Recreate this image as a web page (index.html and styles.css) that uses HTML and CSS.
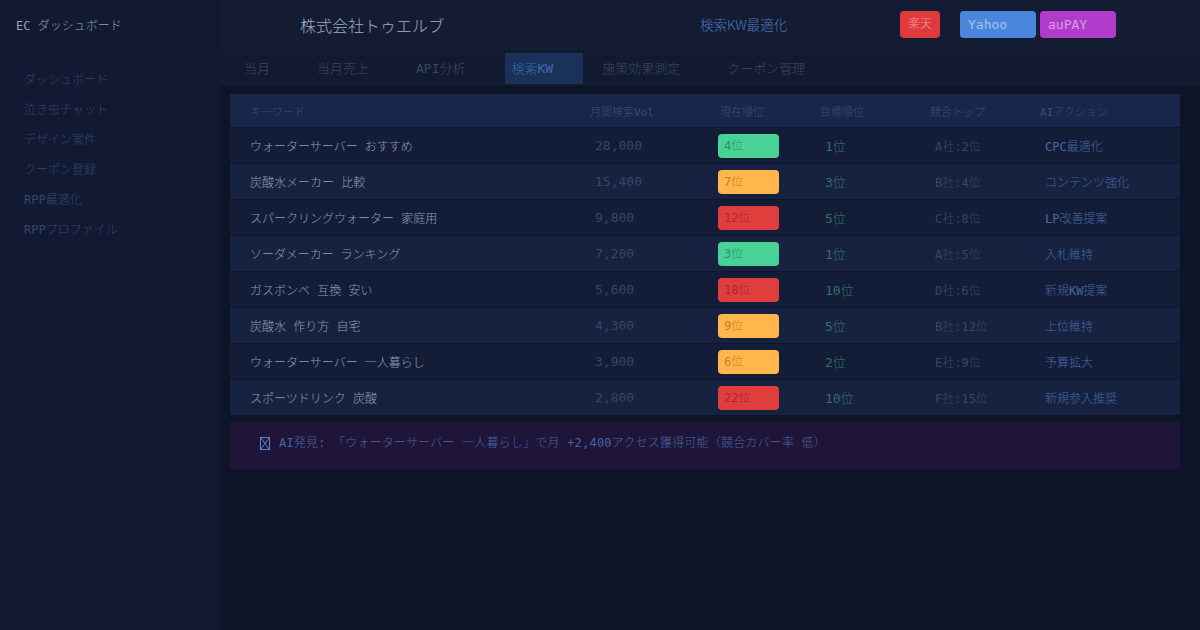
FILE: index.html
```html
<!DOCTYPE html>
<html lang="ja">
<head>
  <meta charset="UTF-8">
  <title>EC ダッシュボード - 検索KW最適化</title>
  <link rel="stylesheet" href="styles.css">
</head>
<body>
  <aside class="sidebar">
    <div class="brand">EC ダッシュボード</div>
    <nav class="side-nav">
      <a>ダッシュボード</a>
      <a>泣き虫チャット</a>
      <a>デザイン案件</a>
      <a>クーポン登録</a>
      <a>RPP最適化</a>
      <a>RPPプロファイル</a>
    </nav>
  </aside>

  <main class="main">
    <header class="topbar">
      <div class="company">株式会社トゥエルブ</div>
      <div class="page-title">検索KW最適化</div>
      <div class="malls">
        <span class="mall rakuten">楽天</span>
        <span class="mall yahoo">Yahoo</span>
        <span class="mall aupay">auPAY</span>
      </div>
    </header>

    <nav class="tabs">
      <span class="tab">当月</span>
      <span class="tab">当月売上</span>
      <span class="tab">API分析</span>
      <span class="tab active">検索KW</span>
      <span class="tab">施策効果測定</span>
      <span class="tab">クーポン管理</span>
    </nav>

    <section class="content">
      <div class="kw-table">
        <div class="row head">
          <span>キーワード</span>
          <span>月間検索Vol</span>
          <span>現在順位</span>
          <span>目標順位</span>
          <span>競合トップ</span>
          <span>AIアクション</span>
        </div>
        <div class="row">
          <span class="kw">ウォーターサーバー おすすめ</span>
          <span class="vol">28,000</span>
          <span><b class="rank good">4位</b></span>
          <span class="target">1位</span>
          <span class="rival">A社:2位</span>
          <span class="action">CPC最適化</span>
        </div>
        <div class="row">
          <span class="kw">炭酸水メーカー 比較</span>
          <span class="vol">15,400</span>
          <span><b class="rank mid">7位</b></span>
          <span class="target">3位</span>
          <span class="rival">B社:4位</span>
          <span class="action">コンテンツ強化</span>
        </div>
        <div class="row">
          <span class="kw">スパークリングウォーター 家庭用</span>
          <span class="vol">9,800</span>
          <span><b class="rank bad">12位</b></span>
          <span class="target">5位</span>
          <span class="rival">C社:8位</span>
          <span class="action">LP改善提案</span>
        </div>
        <div class="row">
          <span class="kw">ソーダメーカー ランキング</span>
          <span class="vol">7,200</span>
          <span><b class="rank good">3位</b></span>
          <span class="target">1位</span>
          <span class="rival">A社:5位</span>
          <span class="action">入札維持</span>
        </div>
        <div class="row">
          <span class="kw">ガスボンベ 互換 安い</span>
          <span class="vol">5,600</span>
          <span><b class="rank bad">18位</b></span>
          <span class="target">10位</span>
          <span class="rival">D社:6位</span>
          <span class="action">新規KW提案</span>
        </div>
        <div class="row">
          <span class="kw">炭酸水 作り方 自宅</span>
          <span class="vol">4,300</span>
          <span><b class="rank mid">9位</b></span>
          <span class="target">5位</span>
          <span class="rival">B社:12位</span>
          <span class="action">上位維持</span>
        </div>
        <div class="row">
          <span class="kw">ウォーターサーバー 一人暮らし</span>
          <span class="vol">3,900</span>
          <span><b class="rank mid">6位</b></span>
          <span class="target">2位</span>
          <span class="rival">E社:9位</span>
          <span class="action">予算拡大</span>
        </div>
        <div class="row">
          <span class="kw">スポーツドリンク 炭酸</span>
          <span class="vol">2,800</span>
          <span><b class="rank bad">22位</b></span>
          <span class="target">10位</span>
          <span class="rival">F社:15位</span>
          <span class="action">新規参入推奨</span>
        </div>
      </div>

      <div class="insight">
        <svg class="insight-icon" width="10" height="13" viewBox="0 0 10 13">
          <rect x="0.5" y="0.5" width="9" height="12" fill="none" stroke="currentColor"/>
          <path d="M1 1 L9 12 M9 1 L1 12" stroke="currentColor" fill="none"/>
        </svg>
        <span>AI発見: 「ウォーターサーバー 一人暮らし」で月 +2,400アクセス獲得可能（競合カバー率 低）</span>
      </div>
    </section>
  </main>
</body>
</html>
```

FILE: styles.css
```css
* { box-sizing: border-box; }
html, body { height: 100%; }
body {
  margin: 0;
  display: flex;
  background: #0e1428;
  font-family: "DejaVu Sans Mono", "Noto Sans CJK JP Light", "Noto Sans CJK JP", monospace;
  font-size: 12px;
  color: #949db2;
  text-spacing-trim: space-all;
}

/* sidebar */
.sidebar { width: 220px; flex: none; background: #111a32; padding: 18px 16px 16px; }
.brand { line-height: 16px; color: #97a1b8; }
.side-nav { margin-top: 31px; display: flex; flex-direction: column; }
.side-nav a { line-height: 30px; padding-left: 8px; color: #36446a; }

/* main column */
.main { flex: 1; display: flex; flex-direction: column; min-width: 0; }

.topbar { height: 50px; flex: none; display: flex; align-items: center; background: #141c34; padding-left: 80px; }
.company, .page-title { font-family: "Noto Sans CJK JP Light", "Noto Sans CJK JP", sans-serif; }
.company { width: 400px; font-size: 16px; color: #a3adc3; }
.page-title { width: 200px; margin-bottom: 3px; font-size: 13.5px; color: #4878b8; }
.malls { display: flex; gap: 4px; margin-bottom: 2px; }
.mall { height: 27px; line-height: 27px; padding: 0 8px; border-radius: 4px; font-size: 13px; color: rgba(255, 255, 255, 0.5); }
.rakuten { background: #e0393c; width: 40px; margin-right: 16px; font-size: 12px; }
.yahoo { background: #4a86db; width: 76px; }
.aupay { background: #b13ccb; width: 76px; }

.tabs { height: 36px; flex: none; display: flex; align-items: center; gap: 11px; background: #121a30; padding-left: 16px; }
.tab { padding: 7px 28px 7px 8px; font-size: 13px; line-height: 17px; color: #38476a; }
.tab.active { padding-left: 7px; padding-right: 30px; background: #1a3257; color: #3d6aab; }

/* keyword table */
.content { padding: 8px 20px 0 10px; }
.kw-table { background: #141d38; }
.row {
  display: grid;
  grid-template-columns: 340px 130px 100px 110px 110px 1fr;
  align-items: center;
  height: 36px;
  padding-left: 20px;
  border-top: 1px solid #0f1730;
}
.row:nth-child(odd) { background: #172240; }
.row.head { height: 33px; border-top: none; background: #18264a; font-size: 11px; color: #3d4d76; }
.row:not(.head) > span:not(:first-child) { padding-left: 5px; }
.vol { font-size: 13px; color: #394563; }
.rank {
  display: block;
  width: 61px;
  height: 24px;
  line-height: 24px;
  margin-left: -7px;
  padding-left: 6px;
  border-radius: 4px;
  font-weight: normal;
}
.rank.good { background: #49d295; color: #2a9564; }
.rank.mid { background: #ffb64c; color: #cc7b28; }
.rank.bad { background: #e03d3d; color: #a52b2e; }
.target { font-size: 13px; color: #2c7266; }
.rival { color: #384563; }
.action { color: #4568a2; }

.insight {
  margin-top: 7px;
  background: #1e1538;
  padding: 14px 30px 18px;
  display: flex;
  align-items: center;
  gap: 9px;
  color: #4a64a0;
  line-height: 15px;
  letter-spacing: 0.2px;
}
.insight-icon { color: #5b82c4; flex: none; }
```
